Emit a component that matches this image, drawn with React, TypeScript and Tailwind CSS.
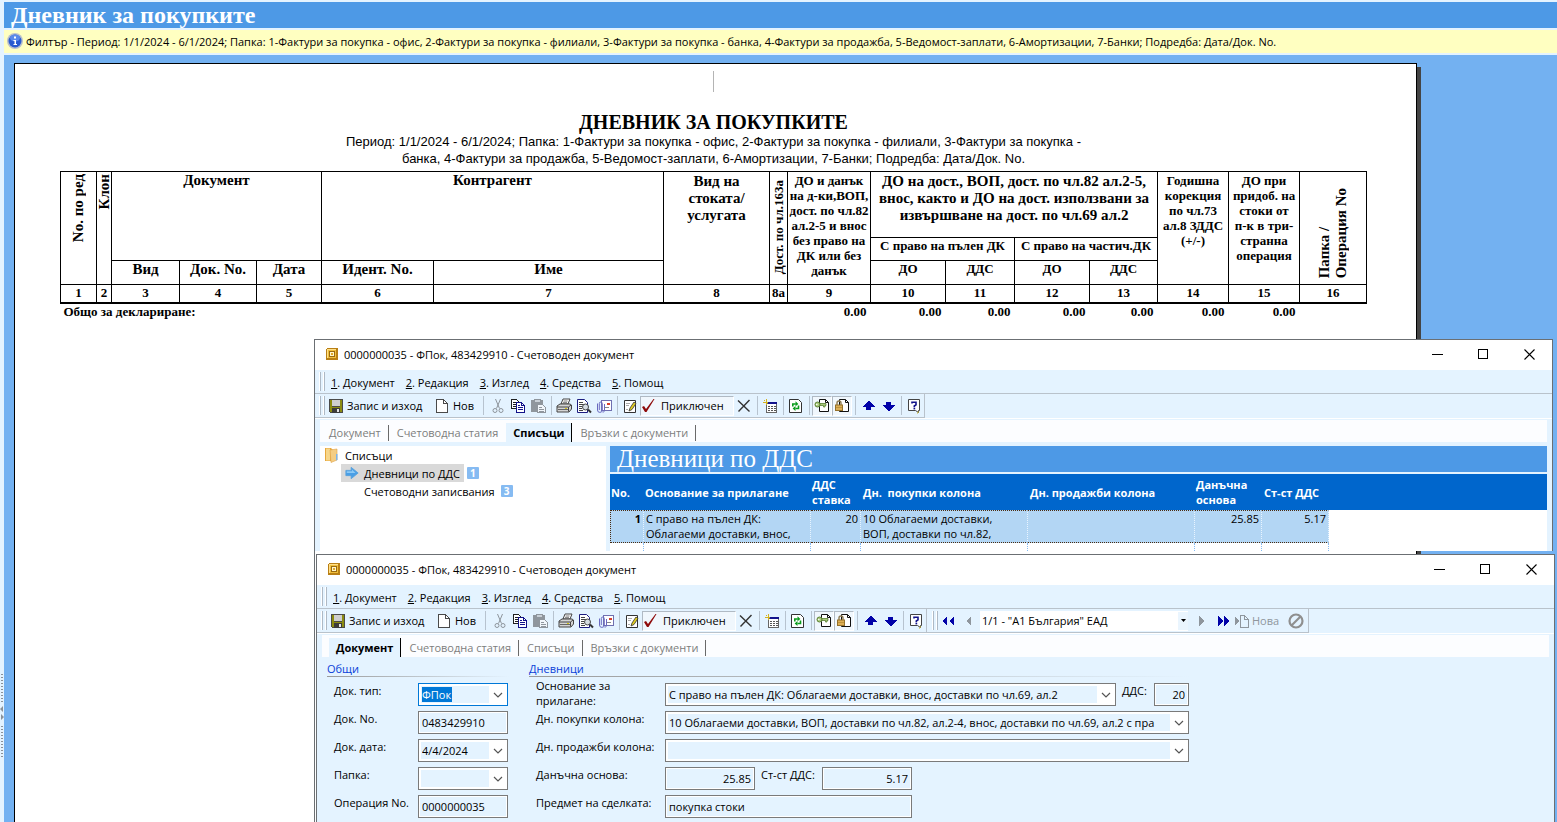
import type { ReactNode } from 'react';

const UI = "font-['Open_Sans','Noto_Sans',sans-serif]";
const SERIF = "font-['Liberation_Serif',serif]";

type IconProps = { children: ReactNode; size?: number; crisp?: boolean };

function Icon({ children, size = 16, crisp = true }: IconProps) {
  return (
    <svg
      width={size}
      height={size}
      viewBox="0 0 16 16"
      fill="none"
      shapeRendering={crisp ? 'crispEdges' : 'auto'}
      className="shrink-0"
      aria-hidden="true"
    >
      {children}
    </svg>
  );
}

const InfoIcon = () => (
  <Icon crisp={false}>
    <circle cx="8" cy="8" r="8" fill="#b9c0cc" />
    <circle cx="8" cy="8" r="6.5" fill="#2a5bd0" />
    <ellipse cx="8" cy="5" rx="5" ry="3.4" fill="#5b8aea" />
    <rect x="7" y="3.5" width="2" height="2" fill="#fff" />
    <path d="M6.5 7H9v4h1v1H6.5v-1h1V8h-1z" fill="#fff" />
  </Icon>
);

const AppIcon = () => (
  <svg width="12" height="12" viewBox="0 0 12 12" fill="none" shapeRendering="crispEdges" aria-hidden="true">
    <path d="M1 0h11v11l-1 1H0V1z" fill="#b97f14" />
    <path d="M1 1h9v9H1z" fill="#f0bf3c" />
    <path d="M1 1h9v1H2v8H1z" fill="#ffe08a" />
    <rect x="3.5" y="3.5" width="5" height="5" fill="#fff6cc" stroke="#9a6a10" />
    <rect x="5" y="5" width="2" height="2" fill="#e0a828" />
  </svg>
);

const SaveIcon = () => (
  <Icon>
    <path d="M1 1h14v14H2l-1-1z" fill="#4a4a4a" />
    <path d="M2 2h2v7H2zM12 2h2v7h-2z" fill="#8c8c10" />
    <rect x="4" y="2" width="8" height="6" fill="#cfcfcf" />
    <path d="M2 9h12v5H2z" fill="#8c8c10" />
    <rect x="4" y="10" width="8" height="5" fill="#3c3c3c" />
    <rect x="9" y="11" width="2" height="3" fill="#e6e6e6" />
  </Icon>
);

const NewIcon = () => (
  <Icon>
    <path d="M2.5 1.5h7l4 4v9h-11z" fill="#fff" stroke="#4a4a4a" />
    <path d="M9.5 1.5v4h4" stroke="#4a4a4a" />
  </Icon>
);

const CutIcon = () => (
  <Icon crisp={false}>
    <path d="M5.500 1l4 9.500M10.500 1L6.500 10.500" stroke="#8e959c" />
    <circle cx="5" cy="12.5" r="2" stroke="#8e959c" />
    <circle cx="11" cy="12.5" r="2" stroke="#8e959c" />
  </Icon>
);

const CopyIcon = () => (
  <Icon>
    <path d="M1.5 1.5h5l2 2v7h-7z" fill="#fff" stroke="#202020" />
    <path d="M3 4.500h3M3 6.500h4M3 8.500h4" stroke="#202020" />
    <path d="M6.5 4.5h5l3 3v7h-8z" fill="#fff" stroke="#12128a" />
    <path d="M11.5 4.5v3h3M8 7.5h2M8 9.5h5M8 11.500h5" stroke="#12128a" />
  </Icon>
);

const PasteIcon = () => (
  <Icon>
    <path d="M1 2h12v12H1z" fill="#8f969d" />
    <path d="M4 1h6v3H4z" fill="#c9d0d7" stroke="#8f969d" />
    <path d="M7.5 6.5h5l3 3v5h-8z" fill="#f1f6fb" stroke="#8f969d" />
    <path d="M9 9.5h3M9 11.5h5M9 13h5" stroke="#8f969d" />
  </Icon>
);

const PrintIcon = () => (
  <Icon crisp={false}>
    <path d="M5 6l2-5h7l-2 5z" fill="#fff" stroke="#444" />
    <path d="M7.5 3h4M7 4.7h4" stroke="#777" />
    <path d="M1 8l3-2h10l1.5 1v4L13 14H1z" fill="#d4d4d4" stroke="#444" />
    <path d="M1 9h11.5v4.5M12.5 9L15 7" stroke="#444" />
    <path d="M2 11.5h10" stroke="#666" />
    <rect x="9" y="10" width="2" height="1" fill="#d8c818" />
  </Icon>
);

const PreviewIcon = () => (
  <Icon crisp={false}>
    <path d="M1.5 1.5h7l3 3v10h-10z" fill="#fff" stroke="#1c1c80" />
    <path d="M3 4.5h4M3 6.5h5M3 8.5h3M3 10.5h3M3 12.5h4" stroke="#444" />
    <circle cx="9.5" cy="9" r="3" fill="#d5dce2" stroke="#444" />
    <path d="M12 11.5l3 3" stroke="#333" strokeWidth="2" />
  </Icon>
);

const MailIcon = () => (
  <Icon crisp={false}>
    <rect x="5.5" y="2.5" width="10" height="10" fill="#fff" stroke="#7070b0" />
    <rect x="11" y="5" width="3" height="2" fill="#d8402c" />
    <path d="M9 9.5h4" stroke="#888" />
    <path
      d="M1.500 5.5v6.500a2.4 2.4 0 0 0 4.8 0V5.5a1.500 1.500 0 0 0-3 0V12M8.500 6v6.500a1.500 1.500 0 0 1-2 1.500"
      stroke="#6a6ac0"
    />
  </Icon>
);

const EditIcon = () => (
  <Icon crisp={false}>
    <path d="M2.5 2.5h11v12h-11z" fill="#fff" stroke="#333" />
    <path d="M4 11.5h2M4 5.500h4M4 7.500h3" stroke="#aaa" />
    <path d="M7 13l1-3 4-6 2 1.5-4 6z" fill="#e2cd20" stroke="#333" strokeWidth=".8" />
  </Icon>
);

const CheckIcon = () => (
  <Icon crisp={false}>
    <path d="M1 9l2-1 2 3L12.500 1h1L5.500 14H4z" fill="#8e0a0a" />
  </Icon>
);

const DeleteIcon = () => (
  <Icon crisp={false}>
    <path d="M2 2.5l11.5 11M13.5 2L2.5 13.5" stroke="#333" strokeWidth="1.4" />
  </Icon>
);

const CalendarIcon = () => (
  <Icon>
    <path d="M4.5 5.5h10v9h-10z" fill="#fff" stroke="#666" />
    <rect x="6" y="4" width="9" height="2" fill="#14148c" />
    <path d="M6 8.500h8M6 10.500h8M6 12.500h8" stroke="#555" strokeDasharray="2 1" />
    <path d="M4 1v6M1 4.5h5M2 2l1 1" stroke="#d6b31e" />
  </Icon>
);

const RefreshIcon = () => (
  <Icon crisp={false}>
    <path d="M1.5 1.5h9l3 3v10h-12z" fill="#fff" stroke="#333" />
    <path d="M4.8 8.5V6h3" stroke="#0a9c1c" strokeWidth="1.6" />
    <path d="M7.500 3.3v5L10.400 6z" fill="#0a9c1c" />
    <path d="M10.500 7.500V10.500h-3" stroke="#0a9c1c" strokeWidth="1.6" />
    <path d="M7.5 8v5L4.6 10.500z" fill="#0a9c1c" />
  </Icon>
);

const KeyIcon = () => (
  <Icon crisp={false}>
    <path d="M5.5 1.5h6l3 3v9h-9z" fill="#fff" stroke="#111" />
    <path d="M11.5 1.5v3h3" stroke="#111" />
    <circle cx="3.5" cy="6.500" r="2.500" fill="#a9c97c" stroke="#5b8232" />
    <path d="M6 5.500h6v2h-1v1.500H9.500V7.500H6z" fill="#a9c97c" stroke="#5b8232" strokeWidth=".8" />
    <circle cx="2.8" cy="6.500" r=".8" fill="#fff" />
  </Icon>
);

const LockIcon = () => (
  <Icon crisp={false}>
    <path d="M5.5 1.5h6l3 3v9h-9z" fill="#fff" stroke="#111" />
    <path d="M11.5 1.5v3h3" stroke="#111" />
    <path d="M3 7V5a2 2 0 0 1 4 0v2" stroke="#8d7a50" strokeWidth="1.4" />
    <rect x="1.500" y="7" width="7" height="5.500" fill="#dcae55" stroke="#94702a" />
    <path d="M2 9.500h6" stroke="#b58a35" strokeWidth=".8" />
  </Icon>
);

const UpIcon = () => (
  <Icon>
    <path d="M8 3h1l6 6h-4v3H6V9H2z" fill="#0202a8" />
  </Icon>
);

const DownIcon = () => (
  <Icon>
    <path d="M8 13h1l6-6h-4V4H6v3H2z" fill="#0202a8" />
  </Icon>
);

const HelpIcon = () => (
  <Icon crisp={false}>
    <path d="M2.5 1.5h11v11h-1v2l-3-2h-7z" fill="#fff" stroke="#444" />
    <path d="M6 5.5V4.300h4v2.5L8.300 8v1.2" stroke="#12128a" strokeWidth="1.6" />
    <rect x="7.5" y="9.800" width="1.7" height="1.6" fill="#12128a" />
    <path d="M12.500 13.500l-1 2" stroke="#c9b41c" />
  </Icon>
);

const FolderIcon = () => (
  <Icon crisp={false}>
    <path d="M1 1h6l2 2v11H1z" fill="#e7a83c" />
    <path d="M2 1.5h4v12H2z" fill="#f7d68a" />
    <path d="M6 3l7-1v11l-6 2.500z" fill="#f4cd84" stroke="#e0a548" strokeWidth=".6" />
    <path d="M12 7h1.500v6l-1.500.6z" fill="#7db4ea" />
  </Icon>
);

const ArrowIcon = () => (
  <Icon size={14} crisp={false}>
    <path d="M1 5h6V1.5L15 8l-8 6.5V11H1z" fill="#4a9fe6" stroke="#5aa2dc" />
    <path d="M2 6h6V4l4 4H2z" fill="#8ccaf6" />
  </Icon>
);

const Chevron = () => (
  <svg width="10" height="6" viewBox="0 0 10 6" fill="none" aria-hidden="true">
    <path d="M1 1l4 4 4-4" stroke="#555" strokeWidth="1.2" />
  </svg>
);

function Grip() {
  return (
    <span className="flex shrink-0 gap-[2px] self-stretch py-[2px]">
      <span className="w-[2px] border-r border-[#aeb9c5] bg-white" />
      <span className="w-[2px] border-r border-[#aeb9c5] bg-white" />
    </span>
  );
}

function Sep() {
  return (
    <span className="flex w-[6px] shrink-0 justify-center self-stretch py-[2px]">
      <span className="w-px bg-[#b7c3cf]" />
    </span>
  );
}

function ToolButton({ label, children }: { label: string; children: ReactNode }) {
  return (
    <button type="button" aria-label={label} className="flex h-5 w-5 shrink-0 items-center justify-center">
      {children}
    </button>
  );
}

function PressedButton({ label, children }: { label: string; children: ReactNode }) {
  return (
    <button
      type="button"
      aria-label={label}
      className="flex h-5 w-5 shrink-0 items-center justify-center border border-[#b0bac4] border-r-white border-b-white bg-[#f0f7fd]"
    >
      {children}
    </button>
  );
}

function TitleBar() {
  return (
    <div className="flex h-[30px] items-center bg-white pb-[2px] pl-[11px]">
      <AppIcon />
      <span className="ml-[6px] flex-1">0000000035 - ФПок, 483429910 - Счетоводен документ</span>
      <button type="button" aria-label="Минимизиране" className="flex h-[28px] w-[46px] items-center justify-center">
        <svg width="11" height="11" viewBox="0 0 11 11" shapeRendering="crispEdges">
          <path d="M0 5.5h11" stroke="#000" />
        </svg>
      </button>
      <button type="button" aria-label="Максимизиране" className="flex h-[28px] w-[46px] items-center justify-center">
        <svg width="11" height="11" viewBox="0 0 11 11" fill="none" shapeRendering="crispEdges">
          <rect x="0.5" y="0.5" width="9" height="9" stroke="#000" />
        </svg>
      </button>
      <button type="button" aria-label="Затваряне" className="flex h-[28px] w-[46px] items-center justify-center">
        <svg width="11" height="11" viewBox="0 0 11 11">
          <path d="M.5 .5l10 10M10.500 .5l-10 10" stroke="#000" strokeWidth="1.1" />
        </svg>
      </button>
    </div>
  );
}

const menuItems = ['Документ', 'Редакция', 'Изглед', 'Средства', 'Помощ'];

function MenuBar() {
  return (
    <nav className="flex h-6 items-center border-b border-[#b9c2cb] pl-1">
      <Grip />
      <div className="ml-[6px] flex gap-[11px] pt-[2px]">
        {menuItems.map((item, i) => (
          <button key={item} type="button">
            <u>{i + 1}</u>. {item}
          </button>
        ))}
      </div>
    </nav>
  );
}

function MainToolbar() {
  return (
    <div className="flex h-6 items-center border-r border-b border-[#b9c2cb] pl-1">
      <Grip />
      <button type="button" className="ml-[3px] flex w-[106px] shrink-0 items-center gap-[3px]">
        <SaveIcon />
        Запис и изход
      </button>
      <button type="button" className="flex w-[46px] shrink-0 items-center gap-[3px]">
        <NewIcon />
        Нов
      </button>
      <Sep />
      <span className="w-[2px]" />
      <ToolButton label="Изрежи"><CutIcon /></ToolButton>
      <ToolButton label="Копирай"><CopyIcon /></ToolButton>
      <ToolButton label="Постави"><PasteIcon /></ToolButton>
      <Sep />
      <ToolButton label="Печат"><PrintIcon /></ToolButton>
      <ToolButton label="Преглед"><PreviewIcon /></ToolButton>
      <ToolButton label="Изпрати"><MailIcon /></ToolButton>
      <Sep />
      <ToolButton label="Промени"><EditIcon /></ToolButton>
      <button
        type="button"
        className="flex h-5 w-[94px] shrink-0 items-center gap-1 border border-[#b0bac4] border-r-white border-b-white bg-[#f0f7fd]"
      >
        <CheckIcon />
        Приключен
      </button>
      <ToolButton label="Изтрий"><DeleteIcon /></ToolButton>
      <Sep />
      <ToolButton label="Нов запис"><CalendarIcon /></ToolButton>
      <Sep />
      <ToolButton label="Обнови"><RefreshIcon /></ToolButton>
      <Sep />
      <PressedButton label="Достъп"><KeyIcon /></PressedButton>
      <PressedButton label="Заключи"><LockIcon /></PressedButton>
      <Sep />
      <ToolButton label="Нагоре"><UpIcon /></ToolButton>
      <ToolButton label="Надолу"><DownIcon /></ToolButton>
      <Sep />
      <ToolButton label="Помощ"><HelpIcon /></ToolButton>
    </div>
  );
}

function RecordToolbar() {
  return (
    <div className="flex h-6 items-center border-r border-b border-[#b9c2cb] pl-[5px] text-[#8f969d]">
      <Grip />
      <button type="button" aria-label="Първи" className="flex h-5 w-5 items-center justify-center">
        <Icon><path d="M7 3v10L2 8zM14 3v10L9 8z" fill="#0202a8" /></Icon>
      </button>
      <button type="button" aria-label="Предишен" className="flex h-5 w-5 items-center justify-center">
        <Icon><path d="M11 3v10L6 8z" fill="#8f969d" /></Icon>
      </button>
      <label className="relative ml-[2px] w-[208px] text-black">
        <select aria-label="Запис" className="block h-5 w-full appearance-none bg-white pl-[2px]">
          <option>1/1 - "А1 България" ЕАД</option>
        </select>
        <span className="pointer-events-none absolute inset-y-px right-0 flex w-[10px] items-center justify-center bg-[#eaf5fe]">
          <svg width="5" height="3" viewBox="0 0 5 3"><path d="M0 0h5L2.500 3z" fill="#000" /></svg>
        </span>
      </label>
      <button type="button" aria-label="Следващ" className="flex h-5 w-7 items-center justify-center">
        <Icon><path d="M5 3v10l5-5z" fill="#8f969d" /></Icon>
      </button>
      <button type="button" aria-label="Последен" className="flex h-5 w-4 items-center justify-center">
        <Icon><path d="M2 3v10l5-5zM8 3v10l5-5z" fill="#0202a8" /></Icon>
      </button>
      <button type="button" className="ml-[2px] flex w-[52px] items-center gap-[2px]">
        <Icon>
          <path d="M1 3v10l4-5z" fill="#8f969d" />
          <path d="M6.500 2.500h4l4 4v8h-8zM10.500 2.500v4h4" stroke="#8f969d" />
        </Icon>
        Нова
      </button>
      <button type="button" aria-label="Отказ" className="mr-[2px] flex h-5 w-5 items-center justify-center">
        <Icon crisp={false}>
          <circle cx="8" cy="8" r="6.5" stroke="#8f8f8f" strokeWidth="2.200" />
          <path d="M3.500 12.500l9-9" stroke="#8f8f8f" strokeWidth="2.200" />
        </Icon>
      </button>
    </div>
  );
}

const tabNames = ['Документ', 'Счетоводна статия', 'Списъци', 'Връзки с документи'];

function TabStrip({ active }: { active: number }) {
  return (
    <div
      role="tablist"
      className={`mx-[5px] mt-px flex h-[22px] bg-[#fcfdff] pt-[3px] ${active === 0 ? 'pl-[7px]' : 'pl-px'}`}
    >
      {tabNames.map((name, i) =>
        i === active ? (
          <button
            key={name}
            type="button"
            role="tab"
            aria-selected="true"
            className="h-[19px] border-r border-black bg-[#e4f3ff] px-[7px] font-bold"
          >
            {name}
          </button>
        ) : (
          <button
            key={name}
            type="button"
            role="tab"
            aria-selected="false"
            className="flex h-[19px] items-center pl-2 text-[#7d7d7d]"
          >
            {name}
            <span className={`ml-[7px] h-4 w-px ${i + 1 === active ? 'bg-transparent' : 'bg-[#6a6a6a]'}`} />
          </button>
        ),
      )}
    </div>
  );
}

function AppWindow({ active, extra, children }: { active: number; extra?: ReactNode; children: ReactNode }) {
  return (
    <section className="border-t border-r border-l border-[#6b6f73] bg-[#e4f3ff]">
      <TitleBar />
      <MenuBar />
      <div className="flex border-b border-white">
        <MainToolbar />
        {extra}
      </div>
      <TabStrip active={active} />
      {children}
    </section>
  );
}

function TreeBadge({ children }: { children: ReactNode }) {
  return (
    <span className="flex h-3 w-3 items-center justify-center rounded-[1px] bg-[#86bbf2] text-[10px] font-bold text-white">
      {children}
    </span>
  );
}

const GRID_CELL =
  'border-y border-r border-dotted border-y-[#4a2c10] border-r-[#e8f4ff] bg-[#b3d6f4] px-[2px] align-top';

function ListsPane() {
  return (
    <div className="mx-[5px] mt-1 flex gap-1">
      <div className="w-[286px] shrink-0 bg-white">
        <div className="flex h-[18px] items-center gap-[5px] pl-1">
          <FolderIcon />
          Списъци
        </div>
        <div className="flex h-[18px] items-center pl-[21px]">
          <span className="flex h-[18px] items-center gap-[5px] bg-[#d9d9d9] px-1">
            <ArrowIcon />
            Дневници по ДДС
          </span>
          <span className="ml-[3px]"><TreeBadge>1</TreeBadge></span>
        </div>
        <div className="flex h-[18px] items-center gap-[6px] pl-[44px]">
          Счетоводни записвания
          <TreeBadge>3</TreeBadge>
        </div>
      </div>
      <div className="min-w-0 flex-1 bg-white">
        <h2 className={`h-[26px] bg-[#4d99e6] pl-[7px] text-[25px] leading-[26px] text-white ${SERIF}`}>
          Дневници по ДДС
        </h2>
        <table className="w-full table-fixed border-separate border-spacing-0 border-t-2 border-[#e4f3ff] leading-[15px]">
          <colgroup>
            <col className="w-[34px]" />
            <col className="w-[167px]" />
            <col className="w-[50px]" />
            <col className="w-[167px]" />
            <col className="w-[167px]" />
            <col className="w-[67px]" />
            <col className="w-[67px]" />
            <col />
          </colgroup>
          <thead className="bg-[#0066cc] text-left text-white">
            <tr className="h-9">
              <th className="px-px">No.</th>
              <th className="px-px">Основание за прилагане</th>
              <th className="px-px">ДДС ставка</th>
              <th className="px-[2px]">Дн.&nbsp; покупки колона</th>
              <th className="px-[2px]">Дн. продажби колона</th>
              <th className="px-px">Данъчна основа</th>
              <th className="px-[2px]">Ст-ст ДДС</th>
              <th />
            </tr>
          </thead>
          <tbody>
            <tr className="h-[33px]">
              <td className={`${GRID_CELL} border-l border-l-[#4a2c10] text-right font-bold`}>1</td>
              <td className={GRID_CELL}>С право на пълен ДК:<br />Облагаеми доставки, внос,</td>
              <td className={`${GRID_CELL} text-right`}>20</td>
              <td className={GRID_CELL}>10 Облагаеми доставки,<br />ВОП, доставки по чл.82,</td>
              <td className={GRID_CELL} />
              <td className={`${GRID_CELL} text-right`}>25.85</td>
              <td className={`${GRID_CELL} text-right`}>5.17</td>
              <td />
            </tr>
            <tr className="h-2">
              {[0, 1, 2, 3, 4, 5, 6].map((n) => (
                <td key={n} className="border-r border-dotted border-[#86bbf2]" />
              ))}
              <td />
            </tr>
          </tbody>
        </table>
      </div>
    </div>
  );
}

function TextField({ id, value, width, right }: { id: string; value: string; width: string; right?: boolean }) {
  return (
    <input
      id={id}
      readOnly
      defaultValue={value}
      className={`h-[23px] border border-[#7a7a7a] bg-[#e4f3ff] px-[3px] shadow-[inset_0_0_0_1px_#ffffff] ${width} ${right ? 'text-right' : ''}`}
    />
  );
}

type ComboProps = { id: string; value: string; width: string; focused?: boolean };

function Combo({ id, value, width, focused }: ComboProps) {
  return (
    <div
      className={`flex h-[23px] border bg-white py-[2px] pl-[2px] ${width} ${focused ? 'border-[#0078d7]' : 'border-[#7a7a7a]'}`}
    >
      <div className="flex min-w-0 flex-1 items-center overflow-hidden bg-[#e4f3ff] pl-px">
        <select
          id={id}
          className={`appearance-none ${focused ? 'h-[15px] bg-[#0078d7] text-white' : 'w-full bg-transparent'}`}
        >
          <option>{value}</option>
        </select>
      </div>
      <span className="pointer-events-none flex w-[18px] shrink-0 items-center justify-center">
        <Chevron />
      </span>
    </div>
  );
}

function Row({ label, id, wide, children }: { label: string; id: string; wide?: boolean; children: ReactNode }) {
  return (
    <div className="flex h-[23px] items-start">
      <label htmlFor={id} className={`shrink-0 ${wide ? 'w-[129px]' : 'w-[84px]'}`}>
        {label}
      </label>
      {children}
    </div>
  );
}

function GroupTitle({ children }: { children: ReactNode }) {
  return (
    <h3 className="h-5 pt-1 text-[#0a3fd8]">
      <span className="block leading-[15px]">{children}</span>
      <span className="block h-px bg-gradient-to-r from-[#9a9a9a] to-[#e4f3ff]" />
    </h3>
  );
}

function DocumentForm() {
  return (
    <form className="flex min-h-[165px] gap-5 pl-[10px] leading-[15px]">
      <fieldset className="w-[182px] shrink-0">
        <GroupTitle>Общи</GroupTitle>
        <div className="mt-[6px] flex flex-col gap-[5px] pl-[7px]">
          <Row label="Док. тип:" id="doc-type"><Combo id="doc-type" value="ФПок" width="w-[90px]" focused /></Row>
          <Row label="Док. No." id="doc-no"><TextField id="doc-no" value="0483429910" width="w-[90px]" /></Row>
          <Row label="Док. дата:" id="doc-date"><Combo id="doc-date" value="4/4/2024" width="w-[90px]" /></Row>
          <Row label="Папка:" id="folder"><Combo id="folder" value="" width="w-[90px]" /></Row>
          <Row label="Операция No." id="op-no"><TextField id="op-no" value="0000000035" width="w-[90px]" /></Row>
        </div>
      </fieldset>
      <fieldset className="w-[660px] shrink-0">
        <GroupTitle>Дневници</GroupTitle>
        <div className="mt-[6px] flex flex-col gap-[5px] pl-[7px]">
          <div className="flex h-[23px] items-start">
            <label htmlFor="basis" className="-mt-[5px] w-[129px] shrink-0 pr-10">Основание за прилагане:</label>
            <Combo id="basis" value="С право на пълен ДК: Облагаеми доставки, внос, доставки по чл.69, ал.2" width="w-[451px]" />
            <label htmlFor="vat" className="ml-[6px] w-8">ДДС:</label>
            <TextField id="vat" value="20" width="w-[35px]" right />
          </div>
          <Row label="Дн. покупки колона:" id="buy-col" wide>
            <Combo
              id="buy-col"
              value="10 Облагаеми доставки, ВОП, доставки по чл.82, ал.2-4, внос, доставки по чл.69, ал.2 с пра"
              width="w-[524px]"
            />
          </Row>
          <Row label="Дн. продажби колона:" id="sell-col" wide><Combo id="sell-col" value="" width="w-[524px]" /></Row>
          <div className="flex h-[23px] items-start">
            <label htmlFor="base" className="w-[129px] shrink-0">Данъчна основа:</label>
            <TextField id="base" value="25.85" width="w-[90px]" right />
            <label htmlFor="vat-sum" className="ml-[6px] w-[61px]">Ст-ст ДДС:</label>
            <TextField id="vat-sum" value="5.17" width="w-[90px]" right />
          </div>
          <Row label="Предмет на сделката:" id="subject" wide>
            <TextField id="subject" value="покупка стоки" width="w-[247px]" />
          </Row>
        </div>
      </fieldset>
    </form>
  );
}

const columnNumbers = ['1', '2', '3', '4', '5', '6', '7', '8', '8а', '9', '10', '11', '12', '13', '14', '15', '16'];

const TH = 'border border-black p-0 align-top';
const TH_SMALL = `${TH} text-[13px] leading-[15px]`;

function Vertical({ children, className = '' }: { children: ReactNode; className?: string }) {
  return (
    <span className={`inline-block rotate-180 text-left whitespace-nowrap [writing-mode:vertical-rl] ${className}`}>
      {children}
    </span>
  );
}

function PurchaseTable() {
  return (
    <table className={`w-full table-fixed border-collapse text-center text-[15px] leading-[17px] font-bold ${SERIF}`}>
      <colgroup>
        <col className="w-[36px]" />
        <col className="w-[15px]" />
        <col className="w-[68px]" />
        <col className="w-[77px]" />
        <col className="w-[65px]" />
        <col className="w-[112px]" />
        <col className="w-[230px]" />
        <col className="w-[106px]" />
        <col className="w-[18px]" />
        <col className="w-[83px]" />
        <col className="w-[75px]" />
        <col className="w-[69px]" />
        <col className="w-[75px]" />
        <col className="w-[68px]" />
        <col className="w-[71px]" />
        <col className="w-[71px]" />
        <col className="w-[67px]" />
      </colgroup>
      <thead>
        <tr className="h-[66px]">
          <th rowSpan={3} className={`${TH} pt-[2px]`}><Vertical>No. по ред</Vertical></th>
          <th rowSpan={3} className={`${TH} pt-[2px]`}><Vertical className="leading-[14px]">Клон</Vertical></th>
          <th rowSpan={2} colSpan={3} className={TH}>Документ</th>
          <th rowSpan={2} colSpan={2} className={TH}>Контрагент</th>
          <th rowSpan={3} className={`${TH} pt-px`}>Вид на<br />стоката/<br />услугата</th>
          <th rowSpan={3} className={`${TH} pt-[8px]`}>
            <Vertical className="text-[13px] leading-[16px]">Дост. по чл.163а</Vertical>
          </th>
          <th rowSpan={3} className={`${TH_SMALL} pt-px whitespace-nowrap`}>
            ДО и данък<br />на д-ки,ВОП,<br />дост. по чл.82<br />ал.2-5 и внос<br />без право на<br />ДК или без<br />данък
          </th>
          <th colSpan={4} className={`${TH} pt-px`}>
            ДО на дост., ВОП, дост. по чл.82 ал.2-5,<br />внос, както и ДО на дост. използвани за<br />извършване на
            дост. по чл.69 ал.2
          </th>
          <th rowSpan={3} className={`${TH_SMALL} pt-px whitespace-nowrap`}>
            Годишна<br />корекция<br />по чл.73<br />ал.8 ЗДДС<br />(+/-)
          </th>
          <th rowSpan={3} className={`${TH_SMALL} pt-px whitespace-nowrap`}>
            ДО при<br />придоб. на<br />стоки от<br />п-к в три-<br />странна<br />операция
          </th>
          <th rowSpan={3} className={`${TH} pt-4`}><Vertical>Папка /<br />Операция No</Vertical></th>
        </tr>
        <tr className="h-[23px]">
          <th colSpan={2} className={TH_SMALL}>С право на пълен ДК</th>
          <th colSpan={2} className={TH_SMALL}>С право на частич.ДК</th>
        </tr>
        <tr className="h-6">
          <th className={TH}>Вид</th>
          <th className={TH}>Док. No.</th>
          <th className={TH}>Дата</th>
          <th className={TH}>Идент. No.</th>
          <th className={TH}>Име</th>
          <th className={TH_SMALL}>ДО</th>
          <th className={TH_SMALL}>ДДС</th>
          <th className={TH_SMALL}>ДО</th>
          <th className={TH_SMALL}>ДДС</th>
        </tr>
        <tr className="h-[18px] text-[13px] leading-[16px]">
          {columnNumbers.map((n) => (
            <th key={n} className="border border-b-2 border-black p-0">{n}</th>
          ))}
        </tr>
      </thead>
      <tbody className="text-[13px] leading-[16px]">
        <tr className="text-right">
          <td colSpan={9} className="pl-[3px] text-left">Общо за деклариране:</td>
          {[9, 10, 11, 12, 13, 14, 15].map((n) => (
            <td key={n} className="p-0 pr-1">0.00</td>
          ))}
          <td />
        </tr>
      </tbody>
    </table>
  );
}

function Splitter() {
  return (
    <div className="flex w-1 shrink-0 flex-col items-center justify-end bg-[#e4f3ff] pb-[64px]">
      <span className="h-[30px] w-[2px] bg-[repeating-linear-gradient(#8b9299_0_1px,transparent_1px_3px)]" />
      <svg width="4" height="22" viewBox="0 0 4 22" fill="#8b9299" aria-hidden="true">
        <path d="M3 2v6L0 5zM1 10v6l3-3z" />
      </svg>
      <span className="h-[32px] w-[2px] bg-[repeating-linear-gradient(#8b9299_0_1px,transparent_1px_3px)]" />
    </div>
  );
}

export default function App() {
  return (
    <div className={`relative flex h-screen overflow-hidden bg-[#73b1f1] text-[11px] leading-[15px] text-black ${UI}`}>
      <Splitter />
      <main className="flex min-w-0 flex-1 flex-col">
        <header className="flex flex-col gap-[2px] bg-[#e4f3ff] py-[2px]">
          <h1 className={`h-[26px] bg-[#4d99e6] pl-[7px] text-[24px] leading-[26px] font-bold text-white ${SERIF}`}>
            Дневник за покупките
          </h1>
          <div className="flex h-[23px] items-center gap-[3px] bg-[#ffffc1] pb-px pl-[3px] whitespace-nowrap">
            <InfoIcon />
            Филтър - Период: 1/1/2024 - 6/1/2024; Папка: 1-Фактури за покупка - офис, 2-Фактури за покупка - филиали,
            3-Фактури за покупка - банка, 4-Фактури за продажба, 5-Ведомост-заплати, 6-Амортизации, 7-Банки; Подредба:
            Дата/Док. No.
          </div>
        </header>
        <div className="mt-2 mr-[140px] ml-[10px] flex-1 border border-b-0 border-black bg-white pt-[7px] pr-[49px] pl-[45px] shadow-[4px_4px_0_#444444]">
          <div className="mx-auto h-[21px] w-px bg-[#b4b4b4]" />
          <h2 className={`mt-[18px] text-center text-[20px] leading-[24px] font-bold ${SERIF}`}>ДНЕВНИК ЗА ПОКУПКИТЕ</h2>
          <p className="-mt-px mb-[4px] text-center font-['Liberation_Sans',sans-serif] text-[13px] leading-[17px]">
            Период: 1/1/2024 - 6/1/2024; Папка: 1-Фактури за покупка - офис, 2-Фактури за покупка - филиали, 3-Фактури за
            покупка -<br />
            банка, 4-Фактури за продажба, 5-Ведомост-заплати, 6-Амортизации, 7-Банки; Подредба: Дата/Док. No.
          </p>
          <PurchaseTable />
        </div>
      </main>

      <div className="absolute top-[339px] right-1 left-[314px]">
        <AppWindow active={2}>
          <ListsPane />
        </AppWindow>
      </div>
      <div className="absolute top-[551px] right-[2px] bottom-0 left-[314px] border-l border-[#6b6f73] pt-[3px] pl-px">
        <AppWindow active={0} extra={<RecordToolbar />}>
          <DocumentForm />
        </AppWindow>
      </div>
    </div>
  );
}
